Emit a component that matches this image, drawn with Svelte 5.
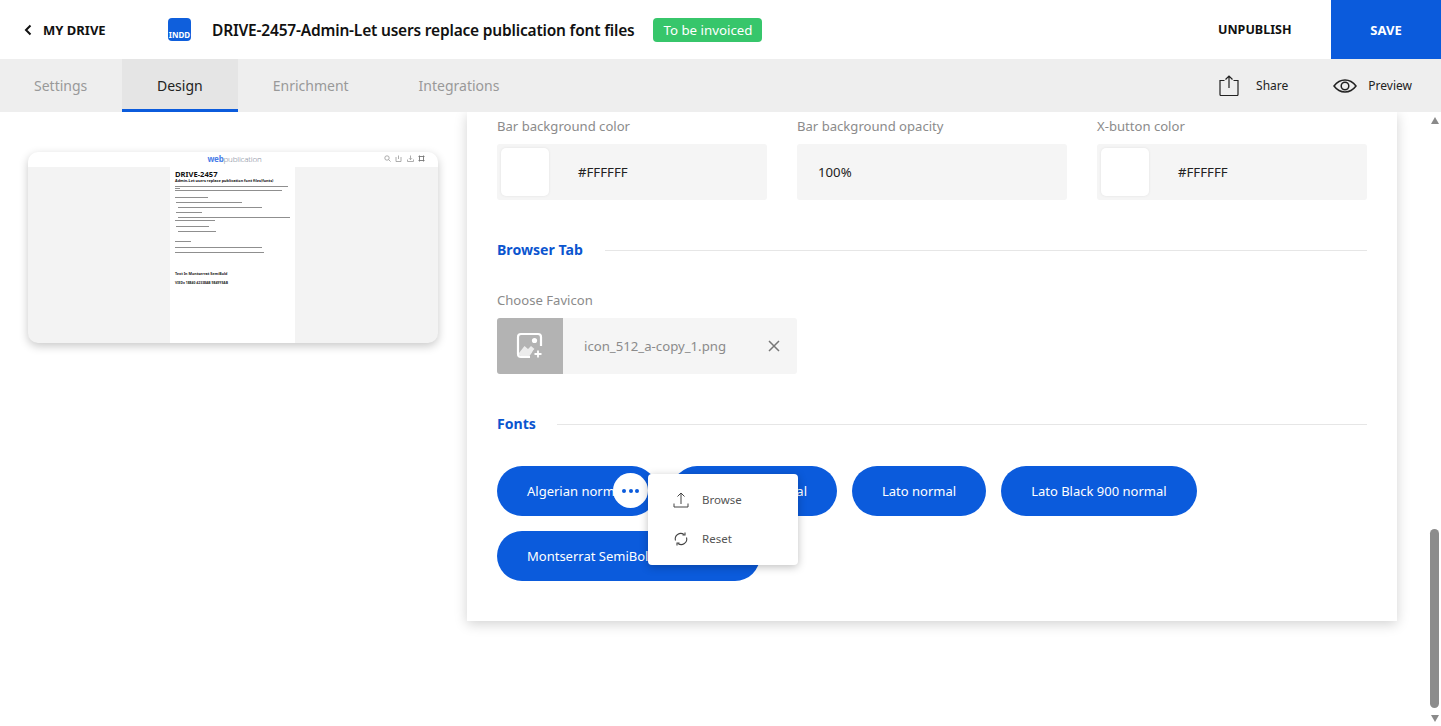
<script>
  const tabs = [
    { label: 'Settings', active: false },
    { label: 'Design', active: true },
    { label: 'Enrichment', active: false },
    { label: 'Integrations', active: false }
  ];
  const fields = [
    { label: 'Bar background color', value: '#FFFFFF', swatch: true },
    { label: 'Bar background opacity', value: '100%', swatch: false },
    { label: 'X-button color', value: '#FFFFFF', swatch: true }
  ];
  const lines = [
    { x: 0, w: 113, t: 3 }, { x: 0, w: 5, t: 1 }, { x: 0, w: 107, t: 1 },
    { x: 0, w: 33, t: 6 }, { x: 1, w: 66, t: 4 }, { x: 3, w: 84, t: 4 },
    { x: 1, w: 26, t: 4 }, { x: 3, w: 112, t: 4 }, { x: 0, w: 40, t: 2 },
    { x: 1, w: 33, t: 5 }, { x: 3, w: 38, t: 4 }, { x: 0, w: 16, t: 9 },
    { x: 0, w: 87, t: 5 }, { x: 0, w: 89, t: 4 }
  ];
</script>

<div class="page">
  <header class="top">
    <a class="back" href="#top">
      <svg width="8" height="12" viewBox="0 0 8 12"><path d="M6.5 1.5 2 6l4.5 4.5" fill="none" stroke="#111" stroke-width="2"/></svg>
      <span>MY DRIVE</span>
    </a>
    <div class="filetype"><span>INDD</span></div>
    <h1>DRIVE-2457-Admin-Let users replace publication font files</h1>
    <span class="badge">To be invoiced</span>
    <button class="unpublish">UNPUBLISH</button>
    <button class="save">SAVE</button>
  </header>

  <nav class="tabs">
    {#each tabs as tab}
      <div class="tab" class:active={tab.active}>{tab.label}</div>
    {/each}
    <div class="actions">
      <div class="action share">
        <svg width="20" height="21" viewBox="0 0 20 21" fill="none" stroke="#222" stroke-width="1.2"><path d="M5.5 5.500H1v14a1 1 0 0 0 1 1h16a1 1 0 0 0 1-1v-14h-4.500M10 13V1M6.500 4.500 10 1l3.500 3.500"/></svg>
        <span>Share</span>
      </div>
      <div class="action preview">
        <svg width="24" height="14" viewBox="0 0 24 14" fill="none" stroke="#222" stroke-width="1.500"><path d="M1 7c3-4 6.500-6 11-6s8 2 11 6c-3 4-6.500 6-11 6S4 11 1 7Z"/><circle cx="12" cy="7" r="3.800"/></svg>
        <span>Preview</span>
      </div>
    </div>
  </nav>

  <main class="main">
    <aside class="left">
      <div class="thumb">
        <div class="thumb-head">
          <div class="logo"><b>web</b>publication</div>
          <div class="thumb-icons">
            <svg width="7" height="7" viewBox="0 0 7 7" fill="none" stroke="#999" stroke-width=".8"><circle cx="3" cy="3" r="2.200"/><path d="m4.600 4.600 2 2"/></svg>
            <svg width="7" height="7" viewBox="0 0 7 7" fill="none" stroke="#999" stroke-width=".8"><path d="M1 2v4.500h5V2M3.500 4V.5"/></svg>
            <svg width="7" height="7" viewBox="0 0 7 7" fill="none" stroke="#999" stroke-width=".8"><path d="M.5 4.500v2h6v-2M3.500.5V4.500M2 3.200l1.500 1.500L5 3.200"/></svg>
            <svg width="7" height="7" viewBox="0 0 7 7" fill="none" stroke="#777" stroke-width=".9"><path d="M1.500.5v6M5.500.5v6M.5 1.500h6M.5 5.500h6"/></svg>
          </div>
        </div>
        <div class="thumb-body">
          <div class="doc">
            <div class="doc-title">DRIVE-2457</div>
            <div class="doc-sub">Admin-Let users replace publication font files(fonts)</div>
            {#each lines as l}
              <div class="doc-line" style="margin-left:{l.x}px;width:{l.w}px;margin-top:{l.t}px"></div>
            {/each}
            <div class="doc-font one">Text In Montserrat SemiBold</div>
            <div class="doc-font two">VIEDx 18840 42338AB 9849YEAB</div>
          </div>
        </div>
      </div>
    </aside>

    <section class="card">
      <div class="fields">
        {#each fields as f}
          <div class="field">
            <div class="label">{f.label}</div>
            <div class="input" class:has-swatch={f.swatch}>
              {#if f.swatch}<span class="swatch"></span>{/if}
              <span>{f.value}</span>
            </div>
          </div>
        {/each}
      </div>

      <div class="heading browser"><span>Browser Tab</span><i></i></div>

      <div class="label">Choose Favicon</div>
      <div class="file">
        <div class="file-icon">
          <svg width="28" height="28" viewBox="0 0 28 28" fill="none" stroke="#fff" stroke-width="2.200">
            <path d="M14 25H5a3 3 0 0 1-3-3V5a3 3 0 0 1 3-3h17a3 3 0 0 1 3 3v9"/>
            <path d="M3 21 8.500 14l3.500 3 3-3 3.500 3-5 7H5a2 2 0 0 1-2-2Z" fill="#fff" fill-opacity=".75" stroke="none"/>
            <circle cx="18.500" cy="8.500" r="2.600" fill="#fff" stroke="none"/>
            <circle cx="22" cy="22" r="6" fill="#b3b3b3" stroke="none"/>
            <path d="M22 18.500v7M18.500 22h7" stroke-width="1.800"/>
          </svg>
        </div>
        <span class="file-name">icon_512_a-copy_1.png</span>
        <svg class="file-x" width="12" height="12" viewBox="0 0 12 12"><path d="m1 1 10 10M11 1 1 11" stroke="#777" stroke-width="1.500"/></svg>
      </div>

      <div class="heading fonts"><span>Fonts</span><i></i></div>

      <div class="pills">
        <div class="pill first">
          Algerian normal
          <span class="more"><b></b><b></b><b></b></span>
          <div class="menu">
            <div class="menu-item">
              <svg width="16" height="16" viewBox="0 0 16 16" fill="none" stroke="#444" stroke-width="1"><path d="M1 11.500V15h14v-3.500M8 12V1M4.500 4.500 8 1l3.500 3.500"/></svg>
              <span>Browse</span>
            </div>
            <div class="menu-item">
              <svg width="16" height="16" viewBox="0 0 16 16" fill="none" stroke="#444" stroke-width="1.100"><path d="M2.500 9.500A5.500 5.500 0 0 1 11 3.500M13.500 6.500A5.500 5.500 0 0 1 5 12.500"/><path d="M12 1.500v2.500H9.500M4 14.500V12h2.500"/></svg>
              <span>Reset</span>
            </div>
          </div>
        </div>
        <div class="pill second">Helvetica normal</div>
        <div class="pill">Lato normal</div>
        <div class="pill">Lato Black 900 normal</div>
        <div class="pill">Montserrat SemiBold 600 normal</div>
      </div>
    </section>

    <div class="scrollbar">
      <span class="arrow up"></span>
      <span class="track"></span>
      <span class="thumbbar"></span>
      <span class="arrow down"></span>
    </div>
  </main>
</div>

<style>
  :global(body) { margin: 0; background: #fff; }
  .page {
    width: 1441px; height: 726px; overflow: hidden; display: flex; flex-direction: column;
    font-family: "Noto Sans", "Open Sans", sans-serif; color: #222; background: #fff;
  }
  .top { height: 59px; flex: none; display: flex; align-items: center; padding-left: 24px; }
  .back { display: flex; align-items: center; gap: 11px; width: 144px; color: #111; text-decoration: none; font-size: 13px; font-weight: 700; }
  .filetype {
    width: 23px; height: 23px; border-radius: 4px; background: #0f5fdc; margin-right: 21px;
    display: flex; align-items: flex-end; justify-content: center;
  }
  .filetype span { color: #fff; font-size: 8px; font-weight: 700; line-height: 12px; }
  h1 { margin: 0; font-size: 15.500px; font-weight: 600; color: #111; letter-spacing: -.19px; white-space: nowrap; }
  .badge {
    margin-left: 19px; width: 109px; height: 24px; border-radius: 4px; background: #37c66b; color: #fff;
    font-size: 13.300px; line-height: 24px; text-align: center;
  }
  button { border: 0; font-family: inherit; font-weight: 700; cursor: pointer; }
  .unpublish { margin-left: auto; background: none; color: #111; font-size: 12.500px; padding: 0; width: 72px; margin-right: 41px; white-space: nowrap; }
  .save { width: 110px; height: 59px; background: #0b5bdc; color: #fff; font-size: 13px; padding: 0; }

  .tabs { height: 53px; flex: none; display: flex; background: #eee; position: relative; z-index: 2; }
  .tab { padding: 0 35px; height: 53px; box-sizing: border-box; line-height: 53px; color: #999; font-size: 14px; }
  .tab:first-child { padding: 0 34px; width: 122px; }
  .tab.active { background: #e5e5e5; color: #222; border-bottom: 3px solid #0b5bdc; }
  .actions { margin-left: auto; display: flex; align-items: center; padding-right: 29px; font-size: 12px; }
  .action { display: flex; align-items: center; }
  .share { gap: 17px; margin-right: 45px; }
  .preview { gap: 11px; }

  .main { flex: 1; min-height: 0; display: flex; align-items: flex-start; overflow: hidden; }
  .left { width: 467px; flex: none; box-sizing: border-box; padding: 40px 0 0 28px; }
  .thumb {
    width: 410px; height: 191px; border-radius: 10px; overflow: hidden; display: flex; flex-direction: column;
    background: #f3f3f3; box-shadow: 0 3px 10px rgba(0,0,0,.22);
  }
  .thumb-head { height: 15px; flex: none; background: #fff; position: relative; display: flex; align-items: center; justify-content: center; }
  .logo { font-size: 8px; line-height: 13px; color: #8a8fa0; font-weight: 300; letter-spacing: -.2px; margin-left: 3px; margin-bottom: 2px; }
  .logo b { color: #4a7ee8; font-weight: 700; }
  .thumb-icons { position: absolute; right: 13px; top: 3px; display: flex; gap: 4.500px; }
  .thumb-body { flex: 1; display: flex; padding-left: 142px; }
  .doc { width: 125px; background: #fff; box-sizing: border-box; padding: 3px 5px 0; }
  .doc-title { font-size: 7.600px; line-height: 8px; font-weight: 700; color: #111; white-space: nowrap; }
  .doc-sub { font-size: 3.800px; line-height: 5px; font-weight: 700; color: #111; white-space: nowrap; }
  .doc-line { height: 1px; background: #8f8f8f; }
  .doc-font { font-size: 3.700px; line-height: 6px; font-weight: 700; color: #222; white-space: nowrap; }
  .doc-font.one { margin-top: 18px; }
  .doc-font.two { margin-top: 3px; font-size: 3.400px; }

  .card {
    width: 930px; height: 509px; flex: none; box-sizing: border-box; padding: 4px 30px 0; background: #fff;
    box-shadow: 0 3px 12px rgba(0,0,0,.18);
  }
  .fields { display: flex; gap: 30px; }
  .field { width: 270px; }
  .label { font-size: 13.100px; line-height: 20px; color: #8b8b8b; }
  .input {
    margin-top: 8px; height: 56px; box-sizing: border-box; background: #f5f5f5; border-radius: 3px;
    display: flex; align-items: center; padding-left: 21px; font-size: 13.200px; color: #222;
  }
  .input.has-swatch { padding-left: 4px; }
  .swatch { width: 48px; height: 48px; background: #fff; border-radius: 5px; margin-right: 29px; box-shadow: 0 0 3px rgba(0,0,0,.08); }

  .heading { display: flex; align-items: center; gap: 22px; color: #0b55cf; font-size: 14.100px; font-weight: 700; line-height: 20px; }
  .heading i { flex: 1; height: 1px; background: #e6e6e6; }
  .browser { margin-top: 40px; margin-bottom: 30px; }
  .fonts { margin-top: 40px; margin-bottom: 32px; gap: 21px; }

  .file {
    margin-top: 8px; width: 300px; height: 56px; background: #f5f5f5; border-radius: 3px; overflow: hidden;
    display: flex; align-items: center;
  }
  .file-icon { width: 66px; height: 56px; background: #b3b3b3; display: flex; align-items: center; justify-content: center; }
  .file-name { margin-left: 21px; font-size: 13.200px; color: #8b8b8b; }
  .file-x { margin-left: auto; margin-right: 17px; }

  .pills { display: flex; flex-wrap: wrap; gap: 15px; }
  .pill {
    height: 50px; box-sizing: border-box; padding: 0 30px; border-radius: 25px; background: #0b5bdc; color: #fff;
    font-size: 13px; line-height: 50px; white-space: nowrap;
  }
  .pill.first { position: relative; width: 160px; }
  .pill.second { width: 165px; text-align: right; }
  .more {
    position: absolute; left: 116px; top: 7px; width: 35px; height: 35px; border-radius: 50%; background: #fff;
    display: flex; align-items: center; justify-content: center; gap: 2.500px; z-index: 3;
  }
  .more b { width: 4px; height: 4px; border-radius: 50%; background: #0b5bdc; }
  .menu {
    position: absolute; left: 151px; top: 8px; width: 150px; height: 91px; background: #fff; border-radius: 4px;
    box-shadow: 0 2px 8px rgba(0,0,0,.25); z-index: 4; color: #555; font-size: 11.500px; line-height: 16px;
    box-sizing: border-box; padding-top: 6px;
  }
  .menu-item { height: 39px; display: flex; align-items: center; gap: 13px; padding-left: 25px; }

  .scrollbar { margin-left: 33px; width: 9px; height: 614px; flex: none; display: flex; flex-direction: column; align-items: center; }
  .arrow { width: 0; height: 0; border-left: 4.500px solid transparent; border-right: 4.500px solid transparent; flex: none; }
  .arrow.up { border-bottom: 7px solid #8a8a8a; margin-top: 5px; }
  .arrow.down { border-top: 7px solid #8a8a8a; margin-top: 7px; margin-bottom: 4px; }
  .track { flex: 1; }
  .thumbbar { width: 9px; height: 179px; border-radius: 5px; background: #8c8c8c; flex: none; }
</style>
